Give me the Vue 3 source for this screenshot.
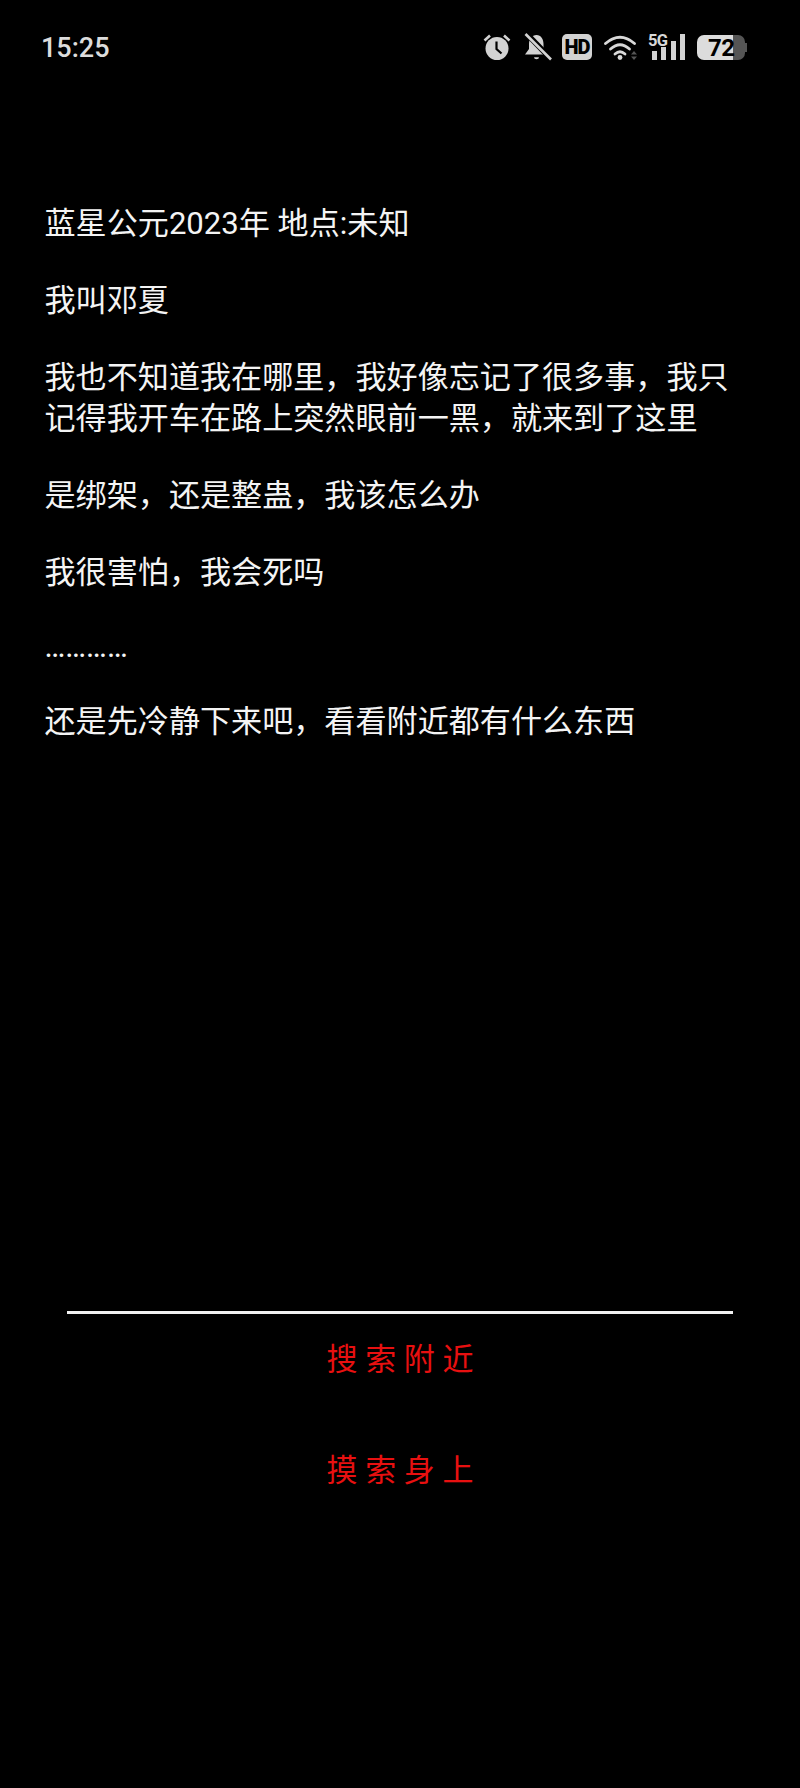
<script setup>
const paragraphs = [
  { text: '蓝星公元2023年 地点:未知' },
  { text: '我叫邓夏' },
  { text: '我也不知道我在哪里，我好像忘记了很多事，我只记得我开车在路上突然眼前一黑，就来到了这里' },
  { text: '是绑架，还是整蛊，我该怎么办' },
  { text: '我很害怕，我会死吗' },
  { text: '…………', latin: true },
  { text: '还是先冷静下来吧，看看附近都有什么东西' },
]
const actions = ['搜 索 附 近', '摸 索 身 上']
</script>

<template>
  <div class="page">
    <header class="status">
      <span class="time">15:25</span>
      <div class="icons">
        <svg class="i-alarm" width="28" height="26" viewBox="0 0 28 26">
          <circle cx="14" cy="14.5" r="11.5" fill="#d2d2d2" />
          <path d="M13.5 7.5v7.5l5 4.5" fill="none" stroke="#000" stroke-width="2.2" />
          <path d="M1.5 6.5 7 1.5M26.5 6.5 21 1.5" fill="none" stroke="#d2d2d2" stroke-width="2.6" />
        </svg>
        <svg class="i-bell" width="28" height="28" viewBox="0 0 28 28">
          <path d="M12.5 2C17 2 19.5 6 19.5 11v5l4 5.5H1l4-5.5v-5C5 6 8 2 12.5 2Z" fill="#d2d2d2" />
          <path d="M10 24.2h5a2.5 2 0 0 1-5 0Z" fill="#d2d2d2" />
          <path d="M2 0 27 26" stroke="#000" stroke-width="5.5" />
          <path d="M1.5 1 27 26.5" stroke="#d2d2d2" stroke-width="2.6" />
        </svg>
        <div class="hd">HD</div>
        <svg class="i-wifi" width="36" height="26" viewBox="0 0 36 26">
          <g fill="none" stroke="#d8d8d8" stroke-width="2.8" stroke-linecap="round">
            <path d="M1.5 9.5Q16-3 30.5 9.5" />
            <path d="M6.5 15Q16 6.5 25.5 15" />
            <path d="M11 20Q16 15.5 21 20" />
          </g>
          <circle cx="16" cy="23.5" r="2.4" fill="#d8d8d8" />
          <path d="M27 20.5l3-3.5 3 3.5ZM27 22.5l3 3.5 3-3.5Z" fill="#555" />
        </svg>
        <div class="signal">
          <span class="g-text">5G</span>
          <svg width="38" height="26" viewBox="0 0 38 26">
            <g fill="#d2d2d2">
              <rect x="4" y="17" width="5" height="9" />
              <rect x="13" y="13" width="5" height="13" />
              <rect x="23" y="7" width="5" height="19" />
              <rect x="32" y="0" width="5" height="26" />
            </g>
          </svg>
        </div>
        <div class="battery"><span>72</span></div>
      </div>
    </header>

    <main class="story">
      <p v-for="(p, i) in paragraphs" :key="i" :class="{ latin: p.latin }">{{ p.text }}</p>
    </main>

    <footer class="actions">
      <div v-for="a in actions" :key="a" class="action">{{ a }}</div>
    </footer>
  </div>
</template>

<style scoped>
.page {
  width: 800px;
  height: 1788px;
  background: #000;
  display: flex;
  flex-direction: column;
  font-family: Roboto, "Noto Sans CJK SC", sans-serif;
  overflow: hidden;
}
.status {
  display: flex;
  justify-content: space-between;
  align-items: center;
  height: 28px;
  padding: 33px 55px 0 41px;
}
.time {
  font-size: 27px;
  font-weight: 500;
  color: #dcdcdc;
  line-height: 30px;
  padding-top: 1px;
}
.icons {
  display: flex;
  align-items: center;
}
.icons svg {
  display: block;
  flex: none;
}
.i-bell { margin-left: 13px; }
.i-wifi { margin-left: 12px; }
.hd {
  margin-left: 10px;
  width: 30px;
  height: 26px;
  border-radius: 5px;
  background: #d2d2d2;
  color: #000;
  font-size: 20px;
  font-weight: 900;
  line-height: 27px;
  letter-spacing: -1px;
  text-align: center;
}
.signal {
  position: relative;
  margin-left: 8px;
  width: 38px;
  height: 26px;
}
.g-text {
  position: absolute;
  left: 0;
  top: 0;
  font-weight: 700;
  font-size: 16.5px;
  line-height: 14px;
  letter-spacing: -0.8px;
  color: #d8d8d8;
}
.battery {
  position: relative;
  margin-left: 11px;
  width: 48px;
  height: 25px;
  border-radius: 7px;
  background: linear-gradient(to right, #dcdcdc 75%, #555 75%);
  color: #000;
  font-size: 24px;
  font-weight: 700;
  line-height: 27px;
  letter-spacing: -0.5px;
  padding-left: 11px;
  box-sizing: border-box;
}
.battery::after {
  content: "";
  position: absolute;
  right: -2px;
  top: 8px;
  width: 2px;
  height: 9px;
  background: #555;
}
.story {
  flex: 1;
  padding: 142px 61px 0 44.5px;
  color: #f4f4f4;
  font-size: 31.1px;
  line-height: 41px;
}
.story p {
  margin: 0 0 36px;
}
.story p.latin {
  line-height: 36px;
}
.actions {
  margin: 0 67px 279px;
  border-top: 3px solid #f0f0f0;
  display: flex;
  flex-direction: column;
  gap: 27px;
}
.action {
  height: 84px;
  display: flex;
  align-items: center;
  justify-content: center;
  color: #e81010;
  font-size: 31px;
}
</style>

<style>
html, body { background: #000; }
</style>
